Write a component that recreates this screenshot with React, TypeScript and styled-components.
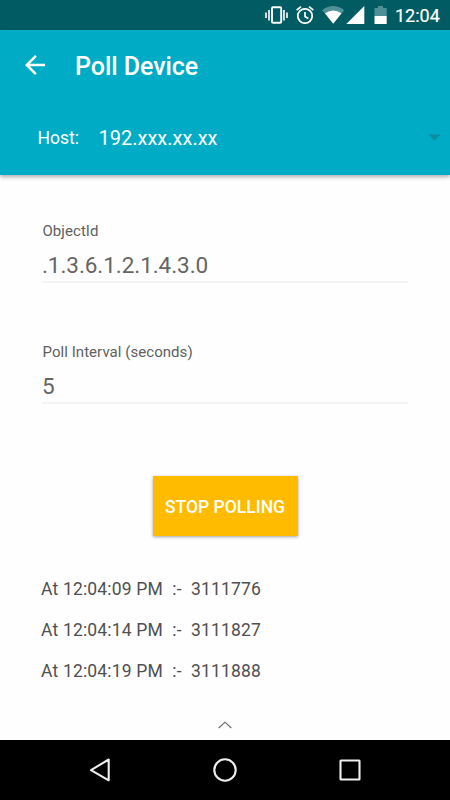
import React from 'react';
import styled, { createGlobalStyle } from 'styled-components';

const GlobalStyle = createGlobalStyle`
  *, *::before, *::after { box-sizing: border-box; }
  body { margin: 0; background: #fff; font-family: Roboto, "Liberation Sans", sans-serif; }
`;

const Screen = styled.div`
  width: 450px;
  height: 800px;
  display: flex;
  flex-direction: column;
  background: #fefefe;
  overflow: hidden;
`;

const StatusBar = styled.div`
  height: 30px;
  flex: none;
  display: flex;
  justify-content: flex-end;
  padding-right: 10px;
  background: #005b63;
  color: #fff;
`;

const Clock = styled.time`
  width: 45px;
  font-size: 18px;
  font-weight: 400;
  -webkit-text-stroke: 0.2px #fff;
  line-height: 32px;
  white-space: nowrap;
`;

const Header = styled.header`
  height: 145px;
  flex: none;
  background: #00acc5;
  color: #fff;
  box-shadow: 0 2px 4px rgba(0, 0, 0, 0.32);
`;

const Toolbar = styled.div`
  height: 70px;
  display: flex;
  align-items: center;
  padding-left: 20px;
`;

const BackButton = styled.button`
  width: 30px;
  height: 30px;
  margin: 0 25px 0 0;
  padding: 0;
  border: 0;
  background: none;
  svg { display: block; }
`;

const Title = styled.h1`
  margin: 4px 0 0;
  font-size: 25px;
  font-weight: 500;
  line-height: 30px;
  letter-spacing: -0.05px;
`;

const HostRow = styled.div`
  height: 75px;
  display: flex;
  align-items: center;
  padding: 0 9px 0 37.5px;
`;

const HostLabel = styled.span`
  width: 61px;
  font-size: 17.5px;
  line-height: 24px;
`;

const HostValue = styled.span`
  flex: 1;
  font-size: 20px;
  line-height: 24px;
`;

const Content = styled.main`
  flex: 1;
  display: flex;
  flex-direction: column;
  padding: 46px 42px 0;
`;

const Field = styled.div`
  height: 62px;
  margin-bottom: 59px;
  border-bottom: 2px solid #f4f4f4;
  display: flex;
  flex-direction: column;
`;

const FieldLabel = styled.label`
  margin-left: 0.5px;
  font-size: 15px;
  line-height: 20px;
  letter-spacing: 0.05px;
  color: #606060;
`;

const FieldValue = styled.span`
  margin-top: 10px;
  font-size: 22.5px;
  line-height: 28px;
  letter-spacing: -0.06px;
  color: #656565;
`;

const StopButton = styled.button`
  align-self: center;
  width: 145px;
  height: 60px;
  margin-top: 13px;
  padding: 1px 0 0;
  border: 0;
  background: #ffbb00;
  color: #fff;
  font: 500 17.5px/60px Roboto, sans-serif;
  box-shadow: 0 1px 3px rgba(0, 0, 0, 0.36);
`;

const Log = styled.div`
  margin: 33px 0 0 -1px;
`;

const LogLine = styled.div`
  height: 41px;
  font-size: 17.5px;
  line-height: 40px;
  letter-spacing: 0.15px;
  word-spacing: 0.2px;
  white-space: pre;
  color: #505050;
`;

const Handle = styled.div`
  display: flex;
  justify-content: center;
  margin-top: 29px;
`;

const NavBar = styled.nav`
  height: 60px;
  flex: none;
  display: flex;
  justify-content: center;
  gap: 85px;
  align-items: center;
  background: #000;
`;

const StatusIcons = () => (
  <svg width="131" height="30" viewBox="264 0 131 30" fill="none">
    <path d="M266 12.5v5.5M269 10v10.5M284 10v10.5M287 12.5v5.5" stroke="#fff" strokeWidth="1.6" />
    <rect x="272" y="7.2" width="9.2" height="15.6" rx="1" stroke="#fff" strokeWidth="1.9" />
    <circle cx="305" cy="16" r="7.2" stroke="#fff" strokeWidth="1.8" />
    <path d="M296.6 10.2l4.4-3.6M313.4 10.2l-4.4-3.6M305 12v4.5l3.3 2" stroke="#fff" strokeWidth="1.7" />
    <path d="M322.2 10.2Q333.2 1.8 344.2 10.2L333.2 23.8Z" fill="#4f9096" />
    <path d="M325 13.3Q333.2 7.8 341.5 13.3L333.2 23.8Z" fill="#fff" />
    <path d="M364.3 6v18h-18Z" fill="#fff" />
    <path d="M374.5 8h3.5V6h5v2h3.7v8h-12.2Z" fill="#4f9096" />
    <path d="M374.5 16h12.2v8h-12.2Z" fill="#fff" />
  </svg>
);

const readings = [
  { time: '12:04:09 PM', value: 3111776 },
  { time: '12:04:14 PM', value: 3111827 },
  { time: '12:04:19 PM', value: 3111888 },
];

export default function App() {
  return (
    <>
      <GlobalStyle />
      <Screen>
        <StatusBar>
          <StatusIcons />
          <Clock>12:04</Clock>
        </StatusBar>
        <Header>
          <Toolbar>
            <BackButton aria-label="Back">
              <svg width="30" height="30" viewBox="0 0 24 24" fill="#fff">
                <path d="M20 11H7.83l5.59-5.59L12 4l-8 8 8 8 1.41-1.41L7.83 13H20v-2z" />
              </svg>
            </BackButton>
            <Title>Poll Device</Title>
          </Toolbar>
          <HostRow>
            <HostLabel>Host:</HostLabel>
            <HostValue>192.xxx.xx.xx</HostValue>
            <svg width="13" height="7" viewBox="0 0 13 7">
              <path d="M.3.5h12.4L6.5 6.7Z" fill="#088e9f" />
            </svg>
          </HostRow>
        </Header>
        <Content>
          <Field>
            <FieldLabel>ObjectId</FieldLabel>
            <FieldValue>.1.3.6.1.2.1.4.3.0</FieldValue>
          </Field>
          <Field>
            <FieldLabel>Poll Interval (seconds)</FieldLabel>
            <FieldValue>5</FieldValue>
          </Field>
          <StopButton>STOP POLLING</StopButton>
          <Log>
            {readings.map((r) => (
              <LogLine key={r.time}>{`At ${r.time}  :-  ${r.value}`}</LogLine>
            ))}
          </Log>
          <Handle>
            <svg width="14" height="8" viewBox="0 0 14 8" fill="none">
              <path d="M.7 7L7 1.2 13.3 7" stroke="#666" strokeWidth="1.1" />
            </svg>
          </Handle>
        </Content>
        <NavBar>
          <svg width="40" height="40" viewBox="80 750 40 40" fill="none">
            <path d="M108.7 759.5v20.8L91 770.2Z" stroke="#eee" strokeWidth="2.1" strokeLinejoin="round" />
          </svg>
          <svg width="40" height="40" viewBox="205 750 40 40" fill="none">
            <circle cx="225" cy="770" r="10.7" stroke="#eee" strokeWidth="2.1" />
          </svg>
          <svg width="40" height="40" viewBox="330 750 40 40" fill="none">
            <rect x="340.5" y="760.5" width="19" height="19" rx=".5" stroke="#eee" strokeWidth="2.1" />
          </svg>
        </NavBar>
      </Screen>
    </>
  );
}
